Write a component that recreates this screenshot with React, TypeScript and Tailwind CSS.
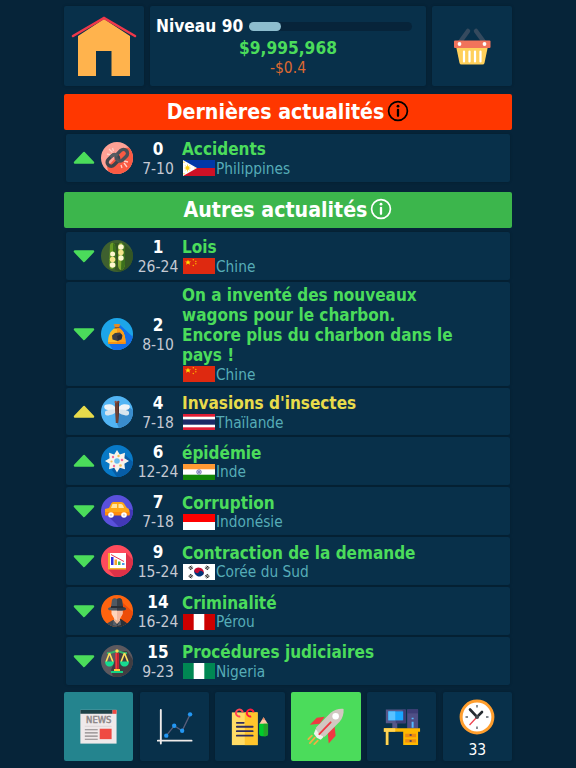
import type { ReactNode } from "react";

type NewsItem = {
  id: number;
  range: string;
  title: string;
  country: string;
  icon: ReactNode;
  flag: ReactNode;
  up?: boolean;
  warning?: boolean;
  tall?: boolean;
};

function Disc({ id, bg, children }: { id: string; bg: string; children: ReactNode }) {
  return (
    <svg viewBox="0 0 32 32" className="block w-8 h-8">
      <clipPath id={id}>
        <circle cx="16" cy="16" r="16" />
      </clipPath>
      <g clipPath={`url(#${id})`}>
        <rect width="32" height="32" fill={bg} />
        {children}
      </g>
    </svg>
  );
}

function Flag({ children }: { children: ReactNode }) {
  return (
    <svg viewBox="0 0 32 16" preserveAspectRatio="none" className="block w-8 h-4 shrink-0">
      {children}
    </svg>
  );
}

const ChainIcon = (
  <Disc id="chain" bg="#ffa195">
    <path d="M32 5v27H8l-2-7L24 6z" fill="#fb5a43" />
    <path d="M8 7l3.500 3.500M11.500 6l1 3M6 12l4 1M20 23l1 3M23 21l3 4M23 19l4 1" stroke="#ffd0c5" strokeWidth="1.300" />
    <g transform="rotate(-45 16.500 16)" fill="none" strokeWidth="3.400">
      <rect x="5" y="10.500" width="13" height="8" rx="4" stroke="#3f454c" />
      <rect x="15" y="13" width="13" height="8" rx="4" stroke="#4b5158" />
      <path d="M14 18.500h1M12 10.500h2q4 0 4 4" stroke="#565c62" strokeWidth="3" />
    </g>
  </Disc>
);

const PeasIcon = (
  <Disc id="peas" bg="#3e602f">
    <path d="M12 3l2 27 6 2h12V12L22 3z" fill="#31521f" opacity=".7" />
    <path d="M9 5c1-3 4-3 5 0l1 19c0 3-2 5-4 5s-3-2-3-4z" fill="#689a25" />
    <path d="M12 3c2 1 3 4 3 7v14c0 3-2 5-3 5z" fill="#3c711c" />
    <path d="M17 7c0-3 2-5 4-4 3 1 3 5 3 9v12c0 3-2 6-4 6s-3-3-3-5z" fill="#82a832" />
    <path d="M21 3c3 1 3 5 3 9v12c0 3-2 6-4 6z" fill="#3c711c" />
    <g fill="#fff7ce">
      <circle cx="11.600" cy="14" r="2.500" />
      <circle cx="11.600" cy="25" r="2.800" />
      <circle cx="20" cy="7" r="2.800" />
      <circle cx="20" cy="18" r="2.700" />
    </g>
    <circle cx="11.600" cy="19.500" r="2.700" fill="#f5e48a" />
    <circle cx="20" cy="12.500" r="2.700" fill="#f5e48a" />
  </Disc>
);

const CoalIcon = (
  <Disc id="coal" bg="#1da5e8">
    <path d="M18 6L32 19v13H12l-4-6z" fill="#136ee9" />
    <path d="M12.500 6.500c2-.6 5-.6 7 0L18 9h-4z" fill="#e38a22" />
    <path d="M14 9h4l1 2h-6z" fill="#8e552b" />
    <path d="M13 10.500h6c4 3 5 7 5.500 13 0 2-1 2.500-2.500 2.500H10c-2 0-3-.8-3-2.500.3-6 2-10 6-13z" fill="#ffbd29" />
    <path d="M16 10.500h3c4 3 5 7 5.500 13 0 2-1 2.500-2.500 2.500h-6z" fill="#ff9b18" />
    <path d="M14 15l5-.5 2.500 3-1 4-4 1.500-5-1.500-.5-4z" fill="#3c3e49" />
    <path d="M16 18l4.500-2 .5 4-4 2.500z" fill="#292b38" />
    <path d="M7 25h18" stroke="#f58711" strokeWidth="1.500" />
  </Disc>
);

const DragonflyIcon = (
  <Disc id="dragonfly" bg="#51b4f4">
    <path d="M16 28V13l13-1 3 2v18H18z" fill="#3a8ccc" />
    <path d="M16 14C13 7 7 8 4 9c-2 2 0 5 3 5zM16 14c3-7 9-6 12-5 2 2 0 5-3 5z" fill="#eef3f7" />
    <path d="M16 14c-5-1-11 0-12 2-.5 4 2 4 5 3 3-.5 6-2 7-5zM16 14c5-1 11 0 12 2 .5 4-2 4-5 3-3-.5-6-2-7-5z" fill="#d9e5ee" />
    <path d="M14 6h4v8l-.8 13h-2.400L14 14z" fill="#6d4034" />
    <path d="M17 6h1v8l-1 13z" fill="#4f2c28" />
    <circle cx="14.700" cy="6" r="1.200" fill="#945142" />
    <circle cx="17.300" cy="6" r="1.200" fill="#75392e" />
  </Disc>
);

const VirusIcon = (
  <Disc id="virus" bg="#0879c7">
    <path d="M22 8l10 9v15H16l-5-7z" fill="#075da6" />
    <path d="M16 5l2.800 4.500 5.200-1.700-.6 5.400 4.600 2.800-4.600 2.800.6 5.400-5.200-1.400L16 27.500l-2.800-4.700L8 24.200l.6-5.400L4 16l4.600-2.800L8 7.800l5.200 1.700z" fill="#f7f4ec" />
    <circle cx="16" cy="16" r="2.800" fill="#69bdf0" />
    <g fill="#f46d9b">
      <circle cx="12" cy="12" r="1.200" />
      <circle cx="21" cy="15" r="1.300" />
      <circle cx="13" cy="21" r="1.200" />
    </g>
    <g fill="#f5bf54">
      <circle cx="17.500" cy="11" r="1.200" />
      <circle cx="10.500" cy="16.500" r="1.100" />
      <circle cx="19.500" cy="20.500" r="1.300" />
    </g>
  </Disc>
);

const CarIcon = (
  <Disc id="car" bg="#5a50dc">
    <path d="M5 19l13 13h14V15l-4-1z" fill="#4238b7" />
    <path d="M4 14l4-1 2-4c.5-1.500 1.500-2 3-2h7c2 0 3 1 4 3l2 3c2 .5 2.500 2 2.500 4v3H4z" fill="#ffa617" />
    <path d="M4 17h24.500v3.500H4z" fill="#ff8a0c" />
    <path d="M10 13l1.500-4H16v4zM17.500 9H20c1.500 0 2 1 3 4h-5.500z" fill="#ffe4a0" />
    <circle cx="10" cy="20" r="2.800" fill="#fff" />
    <circle cx="23" cy="20" r="2.800" fill="#fff" />
    <circle cx="10" cy="20" r="1.200" fill="#d5d6e8" />
    <circle cx="23" cy="20" r="1.200" fill="#d5d6e8" />
  </Disc>
);

const SlumpIcon = (
  <Disc id="slump" bg="#ff4b5c">
    <path d="M25 8l7 7v17H14l-7-8z" fill="#df3148" />
    <rect x="8" y="8" width="17" height="16" fill="#fff" />
    <path d="M7 8h2v15h16v1.500H7z" fill="#f0b32e" />
    <rect x="10" y="12" width="2.500" height="8" fill="#2f2ee0" />
    <rect x="13.500" y="14.500" width="2.500" height="5.500" fill="#f4a52a" />
    <rect x="17" y="16.500" width="2.500" height="3.500" fill="#42bd56" />
    <rect x="21" y="18" width="2.500" height="2" fill="#4a9ae9" />
    <path d="M10 9.500l13 7" stroke="#ea3c50" strokeWidth="1" />
  </Disc>
);

const SpyIcon = (
  <Disc id="spy" bg="#ff640f">
    <path d="M22 8l10 9v12H20z" fill="#ed4c09" />
    <path d="M5 29l7-4h8l7 4v4H5z" fill="#404850" />
    <path d="M16 25l4-1 7 5v4H16z" fill="#2b3036" />
    <path d="M13 22h6v4l-3 3-3-3z" fill="#e4b397" />
    <path d="M10.500 14h11v5l-3 5-2.500 1.500L13.500 24l-3-5z" fill="#ffd5bd" />
    <path d="M16 14h5.500v5l-3 5-2.500 1.500z" fill="#f4b89f" />
    <path d="M12.500 25l3.500 6-4-1zM19.500 25L16 31l4-1z" fill="#59616b" />
    <path d="M7 14c0-1.500 3-2 3-2l1-7c1-2 3-2 5-1 2-1 4-1 5 1l1 7s3 .5 3 2-4 1.500-9 1.500S7 15.500 7 14z" fill="#505963" />
    <path d="M16 4c2-1 4-1 5 1l1 7s3 .5 3 2-4 1.500-9 1.500z" fill="#373e46" />
    <path d="M10 11h12v2H10z" fill="#282e35" />
  </Disc>
);

const ScalesIcon = (
  <Disc id="scales" bg="#5d595f">
    <path d="M18 6h8l6 9v17H12l-2-7z" fill="#403d42" />
    <path d="M6 8c5 1 7-2 10-2s5 3 10 2" stroke="#32b56d" strokeWidth="2" fill="none" />
    <path d="M8.500 8L5 17M8.500 8l3.500 9M23.500 8L20 17M23.500 8l3.500 9" stroke="#ffe05b" strokeWidth="1.600" />
    <path d="M4 16.500h9c0 3-2 5-4.500 5S4 19.500 4 16.500zM19 16.500h9c0 3-2 5-4.500 5s-4.500-2-4.500-5z" fill="#16dc91" />
    <rect x="14.300" y="8" width="3.400" height="17" fill="#f3373e" />
    <path d="M16 8h1.700v17H16z" fill="#bd2133" />
    <circle cx="16" cy="6" r="1.700" fill="#ffdb55" />
    <path d="M13 24h6v2h-6z" fill="#ffcb39" />
    <path d="M10 26h12v2H10z" fill="#14d081" />
  </Disc>
);

const Philippines = (
  <Flag>
    <rect width="32" height="8" fill="#0038a8" />
    <rect y="8" width="32" height="8" fill="#ce1126" />
    <path d="M0 0l14 8-14 8z" fill="#fff" />
    <path d="M4.500 4.500v7M1.500 8h6M2.300 5.500l4.400 5M6.700 5.500l-4.400 5" stroke="#fcd116" strokeWidth=".8" />
    <circle cx="4.500" cy="8" r="1.800" fill="#fcd116" />
    <path d="M1 1.500v1.500M1 13v1.500M12 7.500v1" stroke="#fcd116" />
  </Flag>
);

const China = (
  <Flag>
    <rect width="32" height="16" fill="#de2910" />
    <path d="M5 1.800l.8 1.800H8L6.300 4.800l.7 2L5 5.600l-2 1.200.7-2L2 3.600h2.200z" fill="#ffde00" />
    <g fill="#ffb000">
      <circle cx="10.300" cy="1.800" r=".75" />
      <circle cx="12.800" cy="3.400" r=".75" />
      <circle cx="12.800" cy="5.800" r=".75" />
      <circle cx="10.300" cy="7.500" r=".75" />
    </g>
  </Flag>
);

const Thailand = (
  <Flag>
    <rect width="32" height="16" fill="#e01d34" />
    <rect y="2.700" width="32" height="10.600" fill="#fff" />
    <rect y="5.400" width="32" height="5.300" fill="#1b2a66" />
  </Flag>
);

const India = (
  <Flag>
    <rect width="32" height="16" fill="#fff" />
    <rect width="32" height="5.300" fill="#ff9933" />
    <rect y="10.700" width="32" height="5.300" fill="#128807" />
    <circle cx="16" cy="8" r="2.300" fill="#c9c9e6" stroke="#5a5aa5" strokeWidth=".7" />
    <circle cx="16" cy="8" r=".8" fill="#34348c" />
  </Flag>
);

const Indonesia = (
  <Flag>
    <rect width="32" height="8" fill="#ff0000" />
    <rect y="8" width="32" height="8" fill="#fff" />
  </Flag>
);

const Korea = (
  <Flag>
    <rect width="32" height="16" fill="#fff" />
    <g transform="rotate(25 16 8)">
      <path d="M11 8a5 4.300 0 0 1 10 0z" fill="#c60c30" />
      <path d="M11 8a5 4.300 0 0 0 10 0z" fill="#003478" />
      <ellipse cx="13.500" cy="8" rx="2.500" ry="2" fill="#c60c30" />
      <ellipse cx="18.500" cy="8" rx="2.500" ry="2" fill="#003478" />
    </g>
    <g stroke="#222" strokeWidth="1">
      <path d="M5.500 3.800l3-2M6.300 4.800l3-2M7.100 5.800l3-2" />
      <path d="M26.500 3.800l-3-2M25.700 4.800l-3-2M24.900 5.800l-3-2" />
      <path d="M5.500 12.200l3 2M6.300 11.200l3 2M7.100 10.200l3 2" />
      <path d="M26.500 12.200l-3 2M25.700 11.200l-3 2M24.900 10.200l-3 2" />
    </g>
  </Flag>
);

const Peru = (
  <Flag>
    <rect width="32" height="16" fill="#cc0000" />
    <rect x="10.700" width="10.600" height="16" fill="#fff" />
  </Flag>
);

const Nigeria = (
  <Flag>
    <rect width="32" height="16" fill="#008753" />
    <rect x="10.700" width="10.600" height="16" fill="#fff" />
  </Flag>
);

const latest: NewsItem[] = [
  { id: 0, range: "7-10", title: "Accidents", country: "Philippines", icon: ChainIcon, flag: Philippines, up: true },
];

const others: NewsItem[] = [
  { id: 1, range: "26-24", title: "Lois", country: "Chine", icon: PeasIcon, flag: China },
  {
    id: 2,
    range: "8-10",
    title: "On a inventé des nouveaux\nwagons pour le charbon.\nEncore plus du charbon dans le\npays !",
    country: "Chine",
    icon: CoalIcon,
    flag: China,
    tall: true,
  },
  { id: 4, range: "7-18", title: "Invasions d'insectes", country: "Thaïlande", icon: DragonflyIcon, flag: Thailand, up: true, warning: true },
  { id: 6, range: "12-24", title: "épidémie", country: "Inde", icon: VirusIcon, flag: India, up: true },
  { id: 7, range: "7-18", title: "Corruption", country: "Indonésie", icon: CarIcon, flag: Indonesia },
  { id: 9, range: "15-24", title: "Contraction de la demande", country: "Corée du Sud", icon: SlumpIcon, flag: Korea },
  { id: 14, range: "16-24", title: "Criminalité", country: "Pérou", icon: SpyIcon, flag: Peru },
  { id: 15, range: "9-23", title: "Procédures judiciaires", country: "Nigeria", icon: ScalesIcon, flag: Nigeria },
];

const card = "rounded-[2px] bg-[#08304a] shadow-[0_0_3px_rgba(0,0,0,0.2)]";

function Arrow({ up, warning }: { up?: boolean; warning?: boolean }) {
  return (
    <svg viewBox="0 0 22 14" className={up ? "block w-[22px] h-3.5" : "block w-[22px] h-3.5 rotate-180"}>
      <path
        d="M11 2L20 11.500H2z"
        fill={warning ? "#e8db4b" : "#4bdc5b"}
        stroke={warning ? "#e8db4b" : "#4bdc5b"}
        strokeWidth="2.500"
        strokeLinejoin="round"
      />
    </svg>
  );
}

function NewsRow({ item }: { item: NewsItem }) {
  return (
    <div className={`flex items-center pl-[7px] ${card} ${item.tall ? "h-[103.800px]" : "h-[47.900px]"}`}>
      <Arrow up={item.up} warning={item.warning} />
      <div className="ml-[6px]">{item.icon}</div>
      <div className="w-[50px] pt-0.5 text-center leading-[20px]">
        <div className="text-[17px] font-bold text-white">{item.id}</div>
        <div className="text-[15.500px] text-[#c5c9d3]">{item.range}</div>
      </div>
      <div className="-ml-px pt-px leading-[20px]">
        <div
          className={`-mb-px whitespace-pre pt-px text-[17px] font-bold ${item.warning ? "text-[#e8db4b]" : "text-[#4bdc5b]"}`}
        >
          {item.title}
        </div>
        <div className="flex h-[20px] items-center gap-px pl-px text-[15.300px] text-[#56acb7]">
          {item.flag}
          <span className="pt-px">{item.country}</span>
        </div>
      </div>
    </div>
  );
}

function InfoIcon({ color }: { color: string }) {
  return (
    <svg viewBox="0 0 22 22" className="mb-0.5 ml-[3px] block h-[22px] w-[22px]">
      <circle cx="11" cy="11" r="9.400" fill="none" stroke={color} strokeWidth="1.700" />
      <circle cx="11" cy="6.200" r="1.400" fill={color} />
      <path d="M11 9.800v6" stroke={color} strokeWidth="2.300" strokeLinecap="round" />
    </svg>
  );
}

function Header() {
  return (
    <header className="flex h-20 gap-1.5">
      <div className={`w-20 ${card}`}>
        <svg viewBox="0 0 80 80" className="block h-20 w-20">
          <path d="M14 70V30l26-17 26 17v40H47.500V45H32v25z" fill="#ffb34d" />
          <path d="M9 30l31-18 31 18" fill="none" stroke="#f0384a" strokeWidth="2.600" strokeLinecap="round" />
        </svg>
      </div>
      <div className={`flex-1 pt-[10px] ${card}`}>
        <div className="flex h-[21px] items-center pl-1.5">
          <span className="w-[93px] whitespace-nowrap pt-px text-[17.200px] font-bold text-white">Niveau 90</span>
          <div className="h-[9px] w-[163px] rounded-full bg-[#07243a]">
            <div className="h-full w-8 rounded-full bg-[#8dbdce]" />
          </div>
        </div>
        <div className="pt-px text-center text-[17.200px] font-bold leading-[20px] text-[#4bdc5b]">$9,995,968</div>
        <div className="text-center text-[15.500px] leading-[20px] text-[#dc6831]">-$0.4</div>
      </div>
      <div className={`w-20 ${card}`}>
        <svg viewBox="0 0 80 80" className="block h-20 w-20">
          <path d="M28 36l8-11M52 36l-8-11" stroke="#354a5e" strokeWidth="4.500" strokeLinecap="round" />
          <path d="M24 40h32l-3.500 17q-.4 1.500-2 1.500h-21q-1.600 0-2-1.500z" fill="#ffd05b" />
          <rect x="22" y="34.500" width="36.500" height="7.500" rx="1" fill="#f1735b" />
          <circle cx="27.500" cy="38" r="1.900" fill="#fff" />
          <circle cx="52.500" cy="38" r="1.900" fill="#fff" />
          <path d="M32 45.500v10M37.500 45.500v10M43 45.500v10M48.500 45.500v10" stroke="#fff" strokeWidth="2.200" strokeLinecap="round" />
        </svg>
      </div>
    </header>
  );
}

function BottomNav() {
  return (
    <nav className="mt-[7px] flex h-[69.500px] gap-[6.300px]">
      <div className="flex-1 rounded-[2px] bg-[#24848e]">
        <svg viewBox="0 0 70 70" className="block h-full w-full">
          <rect x="16.500" y="18" width="36.500" height="34" fill="#efe9ea" />
          <path d="M16.500 18H49v4H16.500z" fill="#1d4147" />
          <path d="M49 18h4v4h-4z" fill="#ef4a43" />
          <text
            x="22.300"
            y="31.500"
            fontFamily="DejaVu Sans"
            fontSize="8.300"
            fill="#8c8788"
            stroke="#8c8788"
            strokeWidth=".45"
            textLength="25.500"
            lengthAdjust="spacingAndGlyphs"
          >
            NEWS
          </text>
          <path d="M21 34.500h27" stroke="#d5cfcf" strokeWidth=".8" />
          <path d="M21 38h13M21 41.200h13M21 44.400h13M21 47.600h13" stroke="#8c8788" strokeWidth="1.200" />
          <rect x="36" y="37" width="12" height="10.500" fill="#ef4a43" />
        </svg>
      </div>
      <div className={`flex-1 ${card}`}>
        <svg viewBox="0 0 70 70" className="block h-full w-full">
          <path d="M21 18v34M18 49h34" stroke="#efebea" strokeWidth="1.900" strokeLinecap="round" />
          <path d="M26.500 44l8-10 8 5 8-16.500" fill="none" stroke="#595e7a" strokeWidth="1.300" />
          <g fill="#2397f3">
            <circle cx="26.500" cy="44" r="2.200" />
            <circle cx="34.500" cy="34" r="2.200" />
            <circle cx="42.500" cy="39" r="2.200" />
            <circle cx="50.500" cy="22.500" r="2.200" />
          </g>
        </svg>
      </div>
      <div className={`flex-1 ${card}`}>
        <svg viewBox="-0.500 0 70 70" className="block h-full w-full">
          <rect x="16.500" y="20.500" width="26" height="33" fill="#ffdc66" />
          <rect x="29.500" y="20.500" width="13" height="33" fill="#ffc52c" />
          <g fill="none" strokeWidth="2">
            <path d="M25 24.500a3.500 3.500 0 1 1 2.500-4" stroke="#ff4756" />
            <path d="M36 24.500a3.500 3.500 0 1 1 2.500-4" stroke="#ff193e" />
          </g>
          <path d="M21.500 31h7M21.500 35h16M21.500 39.500h16M21.500 44h16" stroke="#2e2b60" strokeWidth="1.800" strokeLinecap="round" />
          <path d="M48.500 25.500l4.500 7H44z" fill="#ffc9a5" />
          <path d="M48.500 25.500l1.500 2.500h-3z" fill="#e9835e" />
          <path d="M44 32h9v10q0 2.500-2.500 2.500h-4Q44 44.500 44 42z" fill="#00cc2b" />
          <path d="M48.500 32H53v10q0 2.500-2.500 2.500h-2z" fill="#25a329" />
        </svg>
      </div>
      <div className="flex-1 rounded-[2px] bg-[#4bdc5b]">
        <svg viewBox="0 0 70 70" className="block h-full w-full">
          <path d="M34 25l-8 1-7 7 10-1zM44 35l1 9-7 8-1-12z" fill="#ef3a42" />
          <path d="M25 37l8 8-3 3-4-2-3-4z" fill="#f0f1eb" />
          <path d="M25 36l15-15c4-3 8-4.500 13-4 .5 5-1 9-4 13L34 45c-3 0-8-4-9-9z" fill="#d2c7c1" />
          <circle cx="45" cy="24.500" r="3.300" fill="#fff" />
          <path d="M28.500 42.500L40 30.500" stroke="#ef3a42" strokeWidth="1.800" strokeLinecap="round" />
          <path d="M21 44l-3.500 3.500M24 46l-5 5.500M27 49l-3.500 3.500" stroke="#eeb044" strokeWidth="1.800" strokeLinecap="round" />
        </svg>
      </div>
      <div className={`flex-1 ${card}`}>
        <svg viewBox="-0.500 0 70 70" className="block h-full w-full">
          <path d="M18.500 17.500h20v14h-20zM25 31h5v6h-5z" fill="#565789" />
          <path d="M35.500 17.500h3v14h-10v-2.500h7z" fill="#3e3e76" />
          <path d="M21 19.500h15v9H21z" fill="#19a5ff" />
          <path d="M21 19.500h7v9h-7z" fill="#59c1ff" />
          <rect x="40" y="17.500" width="11" height="19.500" fill="#4f4f86" />
          <path d="M40 17.500h11v4H40z" fill="#3d3d76" />
          <path d="M45.500 26v1.500M45.500 30v6" stroke="#54baff" strokeWidth="2" />
          <path d="M16.500 36.500h36.500V40H51v13.500H36V40H21v13.500h-2.500V40h-2z" fill="#ffb900" />
          <path d="M16.500 36.500H28V40h-7v13.500h-2.500V40h-2z" fill="#ffd454" />
          <path d="M38 42h11v3.500H38zM38 47.500h11V51H38z" fill="#ed8b13" />
          <path d="M42.500 42.500h2v1.500h-2zM42.500 48.500h2V50h-2z" fill="#35356a" />
        </svg>
      </div>
      <div className={`flex flex-1 flex-col items-center ${card}`}>
        <svg viewBox="0 0 36 36" className="mt-[7px] block h-9 w-9 shrink-0">
          <circle cx="18" cy="18" r="15.900" fill="#fff" stroke="#ff9e2d" strokeWidth="3" />
          <path d="M18 6v2.500M18 27.500V30M6.500 18H9M27 18h2.500" stroke="#59616a" strokeWidth="1.400" />
          <path d="M11 10.500L18 18l5-5" fill="none" stroke="#252b31" strokeWidth="2.600" strokeLinecap="round" />
          <path d="M18 18l-7.500 8" stroke="#ee414d" strokeWidth="1.300" />
          <circle cx="18" cy="18" r="2.100" fill="#454b51" />
        </svg>
        <span className="mt-[5px] text-[15.500px] leading-[20px] text-white">33</span>
      </div>
    </nav>
  );
}

export default function App() {
  return (
    <div className="h-screen w-full overflow-hidden bg-[#062439] font-['DejaVu_Sans_Condensed','DejaVu_Sans',sans-serif]">
      <div className="mx-auto w-[448px] pt-1.5">
        <Header />
        <div className="mt-2 flex h-9 items-center justify-center rounded-[2px] bg-[#ff3700] text-[21.200px] font-bold text-white">
          Dernières actualités
          <InfoIcon color="#000" />
        </div>
        <section className="mt-1 px-0.5">
          {latest.map((item) => (
            <NewsRow key={item.id} item={item} />
          ))}
        </section>
        <div className="mt-[10px] flex h-9 items-center justify-center rounded-[2px] bg-[#3cb64c] text-[21.200px] font-bold text-white">
          Autres actualités
          <InfoIcon color="#fff" />
        </div>
        <section className="mt-1 flex flex-col gap-0.5 px-0.5">
          {others.map((item) => (
            <NewsRow key={item.id} item={item} />
          ))}
        </section>
        <BottomNav />
      </div>
    </div>
  );
}
